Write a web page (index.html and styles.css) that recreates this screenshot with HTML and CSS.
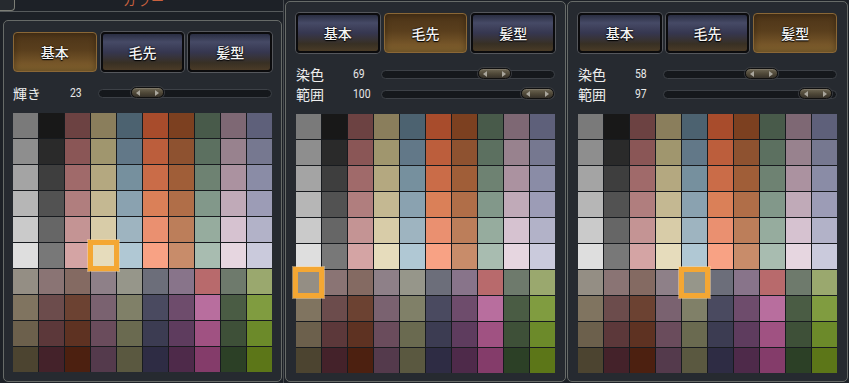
FILE: index.html
```html
<!DOCTYPE html>
<html lang="ja">
<head>
<meta charset="utf-8">
<title>カラー</title>
<link rel="stylesheet" href="styles.css">
</head>
<body>
<div class="screen">
  <section class="frame">
    <div class="titlebar"><span class="tabbox"></span><span class="title">カラー</span></div>
    <div class="box inner">
      <div class="tabs">
        <div class="btn active">基本</div>
        <div class="btn">毛先</div>
        <div class="btn">髪型</div>
      </div>
      <div class="sliders">
        <div class="row"><span class="lbl">輝き</span><span class="val">23</span><span class="track"><span class="thumb" style="--v:0.23"></span></span></div>
      </div>
      <div class="grid">
        <i></i><i></i><i></i><i></i><i></i><i></i><i></i><i></i><i></i><i></i>
        <i></i><i></i><i></i><i></i><i></i><i></i><i></i><i></i><i></i><i></i>
        <i></i><i></i><i></i><i></i><i></i><i></i><i></i><i></i><i></i><i></i>
        <i></i><i></i><i></i><i></i><i></i><i></i><i></i><i></i><i></i><i></i>
        <i></i><i></i><i></i><i></i><i></i><i></i><i></i><i></i><i></i><i></i>
        <i></i><i></i><i></i><i class="sel"></i><i></i><i></i><i></i><i></i><i></i><i></i>
        <i></i><i></i><i></i><i></i><i></i><i></i><i></i><i></i><i></i><i></i>
        <i></i><i></i><i></i><i></i><i></i><i></i><i></i><i></i><i></i><i></i>
        <i></i><i></i><i></i><i></i><i></i><i></i><i></i><i></i><i></i><i></i>
        <i></i><i></i><i></i><i></i><i></i><i></i><i></i><i></i><i></i><i></i>
      </div>
    </div>
  </section>

  <section class="box panel">
    <div class="tabs">
      <div class="btn">基本</div>
      <div class="btn active">毛先</div>
      <div class="btn">髪型</div>
    </div>
    <div class="sliders">
      <div class="row"><span class="lbl">染色</span><span class="val">69</span><span class="track"><span class="thumb" style="--v:0.69"></span></span></div>
      <div class="row"><span class="lbl">範囲</span><span class="val">100</span><span class="track"><span class="thumb" style="--v:1"></span></span></div>
    </div>
    <div class="grid">
      <i></i><i></i><i></i><i></i><i></i><i></i><i></i><i></i><i></i><i></i>
      <i></i><i></i><i></i><i></i><i></i><i></i><i></i><i></i><i></i><i></i>
      <i></i><i></i><i></i><i></i><i></i><i></i><i></i><i></i><i></i><i></i>
      <i></i><i></i><i></i><i></i><i></i><i></i><i></i><i></i><i></i><i></i>
      <i></i><i></i><i></i><i></i><i></i><i></i><i></i><i></i><i></i><i></i>
      <i></i><i></i><i></i><i></i><i></i><i></i><i></i><i></i><i></i><i></i>
      <i class="sel"></i><i></i><i></i><i></i><i></i><i></i><i></i><i></i><i></i><i></i>
      <i></i><i></i><i></i><i></i><i></i><i></i><i></i><i></i><i></i><i></i>
      <i></i><i></i><i></i><i></i><i></i><i></i><i></i><i></i><i></i><i></i>
      <i></i><i></i><i></i><i></i><i></i><i></i><i></i><i></i><i></i><i></i>
    </div>
  </section>

  <section class="box panel">
    <div class="tabs">
      <div class="btn">基本</div>
      <div class="btn">毛先</div>
      <div class="btn active">髪型</div>
    </div>
    <div class="sliders">
      <div class="row"><span class="lbl">染色</span><span class="val">58</span><span class="track"><span class="thumb" style="--v:0.58"></span></span></div>
      <div class="row"><span class="lbl">範囲</span><span class="val">97</span><span class="track"><span class="thumb" style="--v:0.97"></span></span></div>
    </div>
    <div class="grid">
      <i></i><i></i><i></i><i></i><i></i><i></i><i></i><i></i><i></i><i></i>
      <i></i><i></i><i></i><i></i><i></i><i></i><i></i><i></i><i></i><i></i>
      <i></i><i></i><i></i><i></i><i></i><i></i><i></i><i></i><i></i><i></i>
      <i></i><i></i><i></i><i></i><i></i><i></i><i></i><i></i><i></i><i></i>
      <i></i><i></i><i></i><i></i><i></i><i></i><i></i><i></i><i></i><i></i>
      <i></i><i></i><i></i><i></i><i></i><i></i><i></i><i></i><i></i><i></i>
      <i></i><i></i><i></i><i></i><i class="sel"></i><i></i><i></i><i></i><i></i><i></i>
      <i></i><i></i><i></i><i></i><i></i><i></i><i></i><i></i><i></i><i></i>
      <i></i><i></i><i></i><i></i><i></i><i></i><i></i><i></i><i></i><i></i>
      <i></i><i></i><i></i><i></i><i></i><i></i><i></i><i></i><i></i><i></i>
    </div>
  </section>
</div>
</body>
</html>
```

FILE: styles.css
```css
* { box-sizing: border-box; }
body {
  margin: 0;
  width: 849px;
  height: 383px;
  overflow: hidden;
  background: #1d2127;
  font-family: "Noto Sans CJK JP", "Noto Sans", sans-serif;
  color: #ececec;
}
.screen { display: flex; height: 383px; align-items: flex-start; }

.frame {
  width: 284px;
  height: 383px;
  border-right: 1px solid #474b4f;
  display: flex;
  flex-direction: column;
}
.titlebar {
  height: 12px;
  border-bottom: 1px solid #565a5c;
  display: flex;
  overflow: hidden;
}
.tabbox {
  width: 15px;
  height: 11px;
  border-right: 1px solid #7c7e76;
  border-bottom: 1px solid #7c7e76;
  border-bottom-right-radius: 4px;
  background: #262a2f;
}
.title {
  margin-left: 108px;
  margin-top: -7px;
  font-size: 13px;
  line-height: 13px;
  color: #c9603e;
  letter-spacing: 1px;
}

.box {
  background: #262a30;
  border: 1px solid #676b68;
  border-radius: 5px;
}
.inner {
  margin: 8px 0 0 3px;
  width: 279px;
  height: 362px;
  padding: 11px 9px 0 9px;
}
.panel {
  margin: 1px 0 0 1px;
  width: 281px;
  height: 381px;
  padding: 11px 10px 0 10px;
}

.tabs {
  display: grid;
  grid-template-columns: repeat(3, 1fr);
  gap: 4px;
  height: 40px;
}
.btn {
  display: flex;
  align-items: center;
  justify-content: center;
  font-size: 14px;
  font-weight: 500;
  color: #f4f4f4;
  text-shadow: 0 1px 1px #000, 0 0 2px #000;
  border: 2px solid #0b0b0d;
  border-radius: 4px;
  box-shadow: 0 0 0 1px #55575c;
  background: linear-gradient(180deg, #2a2e42 0%, #464a66 22%, #363750 50%, #383024 80%, #4a3b27 100%);
}
.btn.active {
  border: 1px solid #8a6736;
  box-shadow: inset 0 0 6px rgba(0,0,0,0.35);
  background: linear-gradient(180deg, #4c3418 0%, #5a3f1d 45%, #765629 80%, #83642f 100%);
}

.sliders { margin-top: 11px; }
.row {
  display: flex;
  align-items: center;
  height: 20px;
}
.lbl {
  width: 57px;
  font-size: 14px;
  line-height: 20px;
  color: #ededed;
}
.val {
  width: 28px;
  font-family: "Roboto", "Liberation Sans", sans-serif;
  font-size: 13px;
  line-height: 20px;
  color: #e8e8e8;
  display: inline-block;
  transform: scaleX(0.8);
  transform-origin: left center;
}
.track {
  flex: 1;
  height: 9px;
  position: relative;
  border: 1px solid #3d4147;
  border-radius: 5px;
  background: #15181c;
}
.thumb {
  position: absolute;
  top: 50%;
  margin-top: -6px;
  width: 33px;
  height: 11px;
  left: calc((100% - 33px) * var(--v));
  border-radius: 6px;
  border: 1px solid #101010;
  background: linear-gradient(180deg, #6e6754 0%, #4e4737 55%, #37322a 100%);
  box-shadow: inset 0 1px 0 rgba(255,255,255,0.12), 0 0 0 1px #3a3c40;
}
.thumb::before, .thumb::after {
  content: "";
  position: absolute;
  top: 2px;
  border-top: 3px solid transparent;
  border-bottom: 3px solid transparent;
}
.thumb::before { left: 4px; border-right: 4px solid #a9a69c; }
.thumb::after { right: 4px; border-left: 4px solid #a9a69c; }

.grid {
  margin-top: 10px;
  width: 259px;
  height: 259px;
  display: grid;
  grid-template-columns: repeat(10, 1fr);
  grid-template-rows: repeat(10, 1fr);
  gap: 1px;
  background: #181b1f;
}
.grid i { display: block; }
.grid i.sel {
  position: relative;
  z-index: 1;
  box-shadow: 0 0 0 3px #f4a733, inset 0 0 0 2px #f4a733, 0 0 0 4px rgba(255,214,150,0.5);
}

.grid i:nth-child(1){background:#7a7a7a}
.grid i:nth-child(2){background:#181818}
.grid i:nth-child(3){background:#6c4242}
.grid i:nth-child(4){background:#8a7e5c}
.grid i:nth-child(5){background:#4c6270}
.grid i:nth-child(6){background:#a84c2c}
.grid i:nth-child(7){background:#7c4020}
.grid i:nth-child(8){background:#485a4a}
.grid i:nth-child(9){background:#7e6874}
.grid i:nth-child(10){background:#5e607a}
.grid i:nth-child(11){background:#8e8e8e}
.grid i:nth-child(12){background:#2a2a2a}
.grid i:nth-child(13){background:#8a5656}
.grid i:nth-child(14){background:#a0966e}
.grid i:nth-child(15){background:#627888}
.grid i:nth-child(16){background:#bc5e3c}
.grid i:nth-child(17){background:#8e5230}
.grid i:nth-child(18){background:#5c7060}
.grid i:nth-child(19){background:#98828e}
.grid i:nth-child(20){background:#767890}
.grid i:nth-child(21){background:#a4a4a4}
.grid i:nth-child(22){background:#3e3e3e}
.grid i:nth-child(23){background:#a06a6a}
.grid i:nth-child(24){background:#b4a880}
.grid i:nth-child(25){background:#76909e}
.grid i:nth-child(26){background:#ca6c48}
.grid i:nth-child(27){background:#a05e38}
.grid i:nth-child(28){background:#6e8272}
.grid i:nth-child(29){background:#ab92a0}
.grid i:nth-child(30){background:#8a8ca6}
.grid i:nth-child(31){background:#b6b6b6}
.grid i:nth-child(32){background:#525252}
.grid i:nth-child(33){background:#b07e7e}
.grid i:nth-child(34){background:#c4b892}
.grid i:nth-child(35){background:#8aa2b0}
.grid i:nth-child(36){background:#da8058}
.grid i:nth-child(37){background:#b06e48}
.grid i:nth-child(38){background:#82988a}
.grid i:nth-child(39){background:#c0aab8}
.grid i:nth-child(40){background:#9c9cb6}
.grid i:nth-child(41){background:#cacaca}
.grid i:nth-child(42){background:#666666}
.grid i:nth-child(43){background:#c49494}
.grid i:nth-child(44){background:#d8cca8}
.grid i:nth-child(45){background:#9eb4c0}
.grid i:nth-child(46){background:#ea9070}
.grid i:nth-child(47){background:#bc7e5a}
.grid i:nth-child(48){background:#96ac9e}
.grid i:nth-child(49){background:#d6c2d0}
.grid i:nth-child(50){background:#b2b2c8}
.grid i:nth-child(51){background:#dedede}
.grid i:nth-child(52){background:#787878}
.grid i:nth-child(53){background:#d4a4a4}
.grid i:nth-child(54){background:#e6dcbc}
.grid i:nth-child(55){background:#b0c8d4}
.grid i:nth-child(56){background:#f8a284}
.grid i:nth-child(57){background:#c88c6a}
.grid i:nth-child(58){background:#a8bcb0}
.grid i:nth-child(59){background:#e6d6e0}
.grid i:nth-child(60){background:#cacadc}
.grid i:nth-child(61){background:#948e84}
.grid i:nth-child(62){background:#8a7474}
.grid i:nth-child(63){background:#846a62}
.grid i:nth-child(64){background:#8e8088}
.grid i:nth-child(65){background:#96968a}
.grid i:nth-child(66){background:#6c6e7a}
.grid i:nth-child(67){background:#88748a}
.grid i:nth-child(68){background:#b86a6c}
.grid i:nth-child(69){background:#6e7a6c}
.grid i:nth-child(70){background:#9aa86e}
.grid i:nth-child(71){background:#807460}
.grid i:nth-child(72){background:#6c4c4c}
.grid i:nth-child(73){background:#6c4232}
.grid i:nth-child(74){background:#7a6270}
.grid i:nth-child(75){background:#808068}
.grid i:nth-child(76){background:#4a4a60}
.grid i:nth-child(77){background:#6e4c6c}
.grid i:nth-child(78){background:#b86e9e}
.grid i:nth-child(79){background:#4a5c44}
.grid i:nth-child(80){background:#809c40}
.grid i:nth-child(81){background:#6c604c}
.grid i:nth-child(82){background:#5c383a}
.grid i:nth-child(83){background:#5e3222}
.grid i:nth-child(84){background:#6a4c5c}
.grid i:nth-child(85){background:#6a6a50}
.grid i:nth-child(86){background:#3c3c52}
.grid i:nth-child(87){background:#5e3c5e}
.grid i:nth-child(88){background:#a05282}
.grid i:nth-child(89){background:#3e5038}
.grid i:nth-child(90){background:#6c8a2a}
.grid i:nth-child(91){background:#4c4430}
.grid i:nth-child(92){background:#44222a}
.grid i:nth-child(93){background:#4c2010}
.grid i:nth-child(94){background:#543a4c}
.grid i:nth-child(95){background:#5a5840}
.grid i:nth-child(96){background:#2e2c44}
.grid i:nth-child(97){background:#4e2a4a}
.grid i:nth-child(98){background:#843c6a}
.grid i:nth-child(99){background:#2c4026}
.grid i:nth-child(100){background:#5c7618}
```
